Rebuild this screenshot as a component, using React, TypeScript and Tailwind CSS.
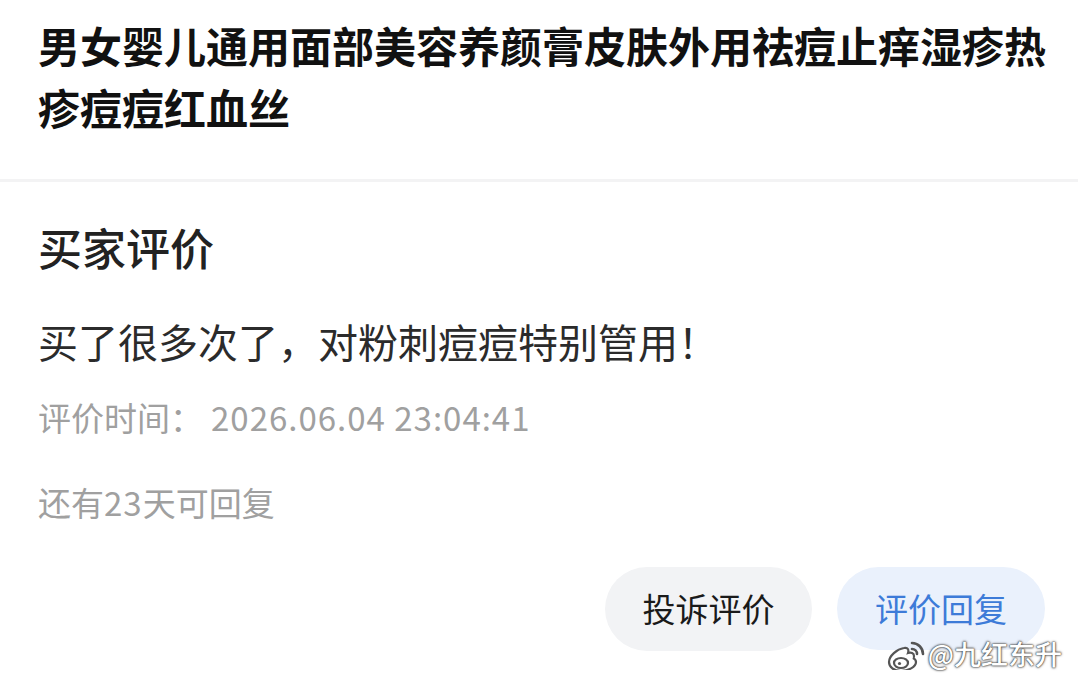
import React from 'react';

const FONT = 'font-["Noto_Sans_CJK_SC","Noto_Sans",sans-serif]';

export default function App() {
  return (
    <div className={`relative w-[1078px] h-[682px] overflow-hidden bg-white ${FONT}`}>
      {/* Product title */}
      <div className="pl-[38px] pr-[20px] pt-[14px] pb-[41px]">
        <h1 className="text-[42px] leading-[62px] font-bold text-[#111]">
          男女婴儿通用面部美容养颜膏皮肤外用祛痘止痒湿疹热疹痘痘红血丝
        </h1>
      </div>

      <div className="h-[3px] bg-[#f3f3f4]" />

      {/* Review */}
      <div className="pl-[38px] pt-[35px]">
        <h2 className="text-[44px] leading-[60px] font-medium text-[#222]">买家评价</h2>
        <p className="mt-[36px] text-[40px] leading-[56px] text-[#2b2b2b]">
          买了很多次了，对粉刺痘痘特别管用！
        </p>
        <p className="mt-[24px] text-[33px] leading-[48px] text-[#a0a0a0]">
          评价时间：<span className="ml-[8px] tracking-[1px]">2026.06.04 23:04:41</span>
        </p>
        <p className="mt-[37px] text-[33px] leading-[48px] text-[#a0a0a0]">
          还有<span className="tracking-[1px]">23</span>天可回复
        </p>
      </div>

      {/* Actions */}
      <div className="mt-[41px] pr-[33px] flex justify-end gap-[25px]">
        <button className="w-[207px] h-[84px] rounded-full bg-[#f2f3f5] text-[33px] text-[#1a1a1a]">
          投诉评价
        </button>
        <button className="w-[208px] h-[83px] rounded-full bg-[#eaf1fc] text-[33px] text-[#3d7bd8]">
          评价回复
        </button>
      </div>

      {/* Watermark */}
      <div className="absolute right-[16px] bottom-[12px] flex items-center gap-[3px]">
        <WeiboLogo />
        <span className="text-[27px] leading-[30px] font-medium text-white [text-shadow:0_0_1px_#333,0_0_2px_#444,0_0_3px_#666]">
          @九红东升
        </span>
      </div>
    </div>
  );
}

function WeiboLogo() {
  return (
    <svg width="40" height="30" viewBox="0 0 40 30" className="mt-[2px]">
      <g stroke="#555" strokeWidth="2.2" fill="white">
        <path d="M4 22c0-6 8-13 15-14 4-1 5 2 4 5 3-1 6 0 6 3 0 1 0 2-1 2 2 1 3 2 3 4 0 5-8 9-15 9C9 31 4 27 4 22z" />
        <ellipse cx="16" cy="23" rx="7" ry="5" />
        <circle cx="14.5" cy="23.5" r="1.6" fill="#555" stroke="none" />
      </g>
      <g stroke="#555" strokeWidth="2.6" fill="none" strokeLinecap="round">
        <path d="M27 9a5 5 0 0 1 5 5" />
        <path d="M27 3a11 11 0 0 1 11 11" />
      </g>
    </svg>
  );
}
